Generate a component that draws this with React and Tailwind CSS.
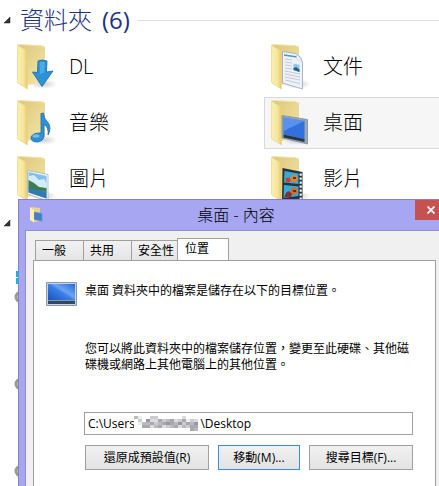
import React, { useId } from 'react';

function Folder({ children }) {
  const id = useId();
  return (
    <svg className="h-[46px] w-10 shrink-0" viewBox="0 0 40 46" aria-hidden="true">
      <defs>
        <linearGradient id={id + 'f'} x1="0" x2="1" y1="0" y2="0">
          <stop offset="0" stopColor="#fbeeb0" />
          <stop offset="0.6" stopColor="#f7e59a" />
          <stop offset="1" stopColor="#e4ca70" />
        </linearGradient>
        <linearGradient id={id + 'b'} x1="0" x2="1" y1="0" y2="1">
          <stop offset="0" stopColor="#dcc67a" />
          <stop offset="1" stopColor="#f5e7a8" />
        </linearGradient>
        <radialGradient id={id + 's'}>
          <stop offset="0" stopColor="#999" stopOpacity="0.5" />
          <stop offset="1" stopColor="#999" stopOpacity="0" />
        </radialGradient>
      </defs>
      <ellipse cx="26" cy="40" rx="14" ry="5" fill={`url(#${id}s)`} />
      <path d="M1 0.5 24 1.5 28 3V38L10 41Z" fill={`url(#${id}b)`} />
      <path d="M1 0.5 24 1.5 28 3" fill="none" stroke="#f3e6ac" />
      <path d="M0.5 1 9 6.5Q10.500 7.500 10.500 9V45L1.500 39.500Q0.500 39 0.500 38Z" fill={`url(#${id}f)`} stroke="#ead588" strokeWidth="0.7" />
      {children}
    </svg>
  );
}

function Downloads() {
  return (
    <Folder>
      <path d="M21 17Q25 15 30 17L29.500 28 36 27 25 42.500 15.500 28 20.500 28.500Z" fill="#2d93d6" stroke="#1768a5" strokeWidth="0.800" />
      <path d="M22.500 18.500Q25 17 28 18.500L27 29 23 30Z" fill="#59b5ea" opacity="0.7" />
    </Folder>
  );
}

function Documents() {
  return (
    <Folder>
      <path d="M11.500 7.500 25 9.500Q31 13 31.500 18V45L11.500 39Z" fill="#eef1f8" stroke="#9aa6b8" strokeWidth="0.800" />
      <path d="M13 11 26 13" stroke="#4c9bb8" strokeWidth="1.500" />
      <path d="M14 15 21 16M14 18 21 19M14 21 21 22M14 24 21 25M14 27 29 30M14 30 29 33M14 33 29 36M14 36 29 39.500" stroke="#c5cad8" />
      <path d="M22.500 19.500 28.500 21V28L22.500 26Z" fill="#8cc7ea" />
      <path d="M22.500 24 25 23 28.500 25.500V28L22.500 26Z" fill="#245f91" />
      <path d="M25 9.500 26 15 31.500 18Z" fill="#fff" stroke="#bcc6d3" strokeWidth="0.600" />
    </Folder>
  );
}

function Music() {
  return (
    <Folder>
      <path d="M24 13.500 26.500 13Q27 19 31 22.500 35 28 31 35 32 27 27 24.500V36.500Q26 41.500 19.500 42 13.500 41.500 14 37 16 32.500 24 33Z" fill="#2f91d2" stroke="#1b6ca8" strokeWidth="0.800" />
      <ellipse cx="19" cy="36" rx="3.500" ry="1.700" fill="#83cbf2" opacity="0.800" />
    </Folder>
  );
}

function Pictures() {
  return (
    <Folder>
      <path d="M10.500 14.500 31 18.500V45L10.500 38Z" fill="#f5f8fa" stroke="#a9b5bd" strokeWidth="0.800" />
      <path d="M11.500 16 29.500 20V42.500L11.500 36.500Z" fill="#7fc0ec" />
      <path d="M12 20 17 19 22 24 27 23 29.500 27V33L12 29Z" fill="#d3edf8" />
      <path d="M11.500 24 17 27 22 31 29.500 32V36L11.500 33Z" fill="#3e7c55" />
      <path d="M11.500 32 29.500 36V42.500L11.500 36.500Z" fill="#327ab0" />
    </Folder>
  );
}

function Desktop() {
  return (
    <Folder>
      <path d="M11 15.500 36.500 19.500V44L11 38Z" fill="#9aa7b5" stroke="#7f8d9e" strokeWidth="0.800" />
      <path d="M12.500 17.500 33.500 21V39L12.500 34.500Z" fill="#3270dc" />
      <path d="M12.500 17.500 33.500 21 12.500 31Z" fill="#6aa0f5" opacity="0.700" />
      <path d="M12.500 34.500 33.500 39V42L12.500 37.500Z" fill="#253549" />
    </Folder>
  );
}

function Videos() {
  return (
    <Folder>
      <path d="M11.500 12 31.500 16V43L11 45Z" fill="#27323a" />
      <path d="M13.500 15 27.500 17.500V28L13 26.500ZM13 29 27.500 30.500V40L12.500 42Z" fill="#39aad8" />
      <circle cx="23" cy="22.500" r="3.500" fill="#e7822b" />
      <circle cx="17" cy="24" r="2.500" fill="#c83f31" />
      <circle cx="23" cy="35" r="3.500" fill="#d8692a" />
      <path d="M14 39Q17 32 21 38L20 41 13 41.500Z" fill="#8b2e2c" />
      <path d="M22 22H25M22 35H25" stroke="#34221a" strokeWidth="1.500" />
      <path d="M29.700 17.500V43" stroke="#f5f5f5" strokeWidth="2.200" strokeDasharray="2.200 1.800" />
    </Folder>
  );
}

function Expander() {
  return (
    <svg className="h-2 w-2 shrink-0" viewBox="0 0 8 8" aria-hidden="true">
      <path d="M7 1V7H1Z" fill="#333" stroke="#222" strokeWidth="0.500" />
    </svg>
  );
}

function DriveIcon() {
  return (
    <svg className="h-4 w-4" viewBox="0 0 16 16" aria-hidden="true">
      <circle cx="7" cy="8" r="5" fill="#ddd" stroke="#999" strokeWidth="3" />
    </svg>
  );
}

const folders = [
  { name: 'DL', Icon: Downloads },
  { name: '文件', Icon: Documents },
  { name: '音樂', Icon: Music },
  { name: '桌面', Icon: Desktop, selected: true },
  { name: '圖片', Icon: Pictures },
  { name: '影片', Icon: Videos },
];

function Explorer() {
  return (
    <main>
      <h1 className="flex h-10 items-center pl-[3px] text-2xl text-[#1e3287]">
        <Expander />
        <span className="ml-[9px] flex gap-2.5 leading-10 font-light">
          資料夾 <span className="font-normal">(6)</span>
        </span>
        <span className="ml-2 h-px flex-1 bg-[#d9dee2]" />
      </h1>
      <ul className="grid grid-cols-[minmax(0,254fr)_minmax(0,175fr)] gap-y-1 pt-px pl-2.5">
        {folders.map(({ name, Icon, selected }) => (
          <li key={name} className="flex">
            <button
              type="button"
              className={
                selected
                  ? 'flex h-13 flex-1 items-center border border-r-0 border-[#d8dada] bg-[#f6f6f6] pl-1.5 text-left'
                  : 'flex h-13 flex-1 items-center border border-r-0 border-transparent pl-1.5 text-left'
              }
            >
              <Icon />
              <span className="ml-3 text-xl font-light">{name}</span>
            </button>
          </li>
        ))}
      </ul>
      <div className="flex h-9 items-center pl-[3px]">
        <Expander />
      </div>
    </main>
  );
}

function DriveList() {
  return (
    <div className="flex flex-col pl-3.5">
      <svg className="mt-7 h-4 w-4" viewBox="0 0 16 16" aria-hidden="true">
        <path d="M2 2H8V8H2ZM2 9H8V15H2Z" fill="#16b5e8" />
      </svg>
      <div className="mt-1 flex flex-col gap-[71px]">
        <DriveIcon />
        <DriveIcon />
        <DriveIcon />
      </div>
    </div>
  );
}

function SmallFolder() {
  return (
    <svg className="h-4 w-4" viewBox="0 0 16 16" aria-hidden="true">
      <path d="M1 0 11 1V14L5 15Z" fill="#e9d58e" />
      <path d="M5 5 13 6.500V14L5 12.500Z" fill="#3e7fd4" stroke="#7592b4" strokeWidth="0.800" />
      <path d="M1 0.500 5 3V15.500L1 13Z" fill="#fff0b3" />
    </svg>
  );
}

function Monitor() {
  return (
    <svg className="h-6 w-8 shrink-0" viewBox="0 0 32 24" aria-hidden="true">
      <defs>
        <linearGradient id="screen" x1="0" x2="1" y1="1" y2="0">
          <stop offset="0" stopColor="#174fb4" />
          <stop offset="0.500" stopColor="#3b80e8" />
          <stop offset="0.600" stopColor="#6ca5f2" />
          <stop offset="1" stopColor="#2869d8" />
        </linearGradient>
      </defs>
      <path d="M0.500 0.500H30.500V23.500H0.500Z" fill="#c6d3e4" stroke="#8799b2" />
      <path d="M2 2H29V19H2Z" fill="url(#screen)" />
      <path d="M2 18.500H29V22H2Z" fill="#33485f" />
      <path d="M2 18.500H29" stroke="#7e9ab8" />
    </svg>
  );
}

const mosaicRows = [
  '4100330000002000',
  '0306225345235132',
  '0144534565463546',
  '0055245234524355',
  '0000000000000054',
];
const greys = ['#ffffff', '#ededf0', '#dcdce0', '#cbcbd0', '#bababf', '#a8a8ae', '#97979e'];

function Mosaic() {
  return (
    <svg className="absolute top-1 left-[50px] h-[15px] w-16" viewBox="0 0 64 15" aria-hidden="true">
      {mosaicRows.map((row, y) =>
        [...row].map((level, x) => (
          <rect key={`${x}-${y}`} x={x * 4} y={y * 3} width="4" height="3" fill={greys[level]} />
        )),
      )}
    </svg>
  );
}

const tabs = ['一般', '共用', '安全性'];
const buttonBase = 'h-[25px] border bg-linear-to-b from-[#f1f1f1] to-[#e3e3e3] text-center text-[12px] leading-[22px]';

function PropertiesDialog() {
  return (
    <section
      role="dialog"
      aria-labelledby="dialog-title"
      className="absolute top-[199px] -right-3 bottom-0 left-[18px] flex flex-col border border-b-0 border-[#8282c4] bg-[#a6a6f2] px-1.5"
    >
      <header className="grid h-[30px] shrink-0 grid-cols-[48px_1fr_45px] items-center">
        <span className="pl-1">
          <SmallFolder />
        </span>
        <h2 id="dialog-title" className="text-center text-base leading-6 font-light">桌面 - 內容</h2>
        <button type="button" aria-label="關閉" className="-mr-[3px] flex h-5 w-8 items-center justify-center self-start justify-self-end bg-[#c75050]">
          <svg className="h-2 w-2" viewBox="0 0 8 8" aria-hidden="true">
            <path d="M0.500 0.500 7.500 7.500M7.500 0.500 0.500 7.500" stroke="#fff" strokeWidth="1.800" />
          </svg>
        </button>
      </header>
      <div className="flex flex-1 flex-col border border-b-0 border-[#8f8fcd] bg-[#f0f0f0] px-[7px] pt-[7px]">
        <div role="tablist" className="flex items-end pl-0.5 text-[12px]">
          {tabs.map((tab) => (
            <button
              key={tab}
              type="button"
              role="tab"
              aria-selected="false"
              className="h-5 w-12 border border-r-0 border-b-0 border-[#a0a0a0] bg-linear-to-b from-[#f2f2f2] to-[#e5e5e5] pl-1.5 text-left leading-5 whitespace-nowrap"
            >
              {tab}
            </button>
          ))}
          <button
            type="button"
            role="tab"
            aria-selected="true"
            className="-mb-px -ml-0.5 h-[23px] w-[52px] border border-b-0 border-[#a0a0a0] bg-white pb-1 pl-[7px] text-left leading-5"
          >
            位置
          </button>
        </div>
        <div role="tabpanel" className="flex-1 border border-b-0 border-[#a0a0a0] bg-white pr-[22px] pl-3 text-[12px] leading-4">
          <div className="mt-[21px] flex items-center">
            <Monitor />
            <p className="ml-[7px] pb-1.5">桌面 資料夾中的檔案是儲存在以下的目標位置。</p>
          </div>
          <div className="pl-[38px]">
            <p className="mt-[35px] mr-[-20px] pl-px">
              您可以將此資料夾中的檔案儲存位置，變更至此硬碟、其他磁
              <br />
              碟機或網路上其他電腦上的其他位置。
            </p>
            <div className="relative mt-[39px]">
              <input
                aria-label="目標位置"
                className="block h-[23px] w-full border border-[#a0a0a0] bg-white px-[3px] text-[12px]"
                defaultValue={'C:\\Users' + '\u00a0'.repeat(21) + '\\Desktop'}
              />
              <Mosaic />
            </div>
            <div className="mt-2.5 flex gap-[9px] pl-px">
              <button type="button" className={buttonBase + ' w-[124px] border-[#a0a0a0]'}>還原成預設值(R)</button>
              <button type="button" className={buttonBase + ' w-[82px] border-[#3c8ddb]'}>移動(M)...</button>
              <button type="button" className={buttonBase + ' flex-1 border-[#a0a0a0]'}>搜尋目標(F)...</button>
            </div>
          </div>
        </div>
      </div>
    </section>
  );
}

export default function App() {
  return (
    <div className="relative min-h-screen overflow-hidden bg-white font-['Open_Sans','Noto_Sans_CJK_TC',sans-serif] text-black">
      <Explorer />
      <DriveList />
      <PropertiesDialog />
    </div>
  );
}
